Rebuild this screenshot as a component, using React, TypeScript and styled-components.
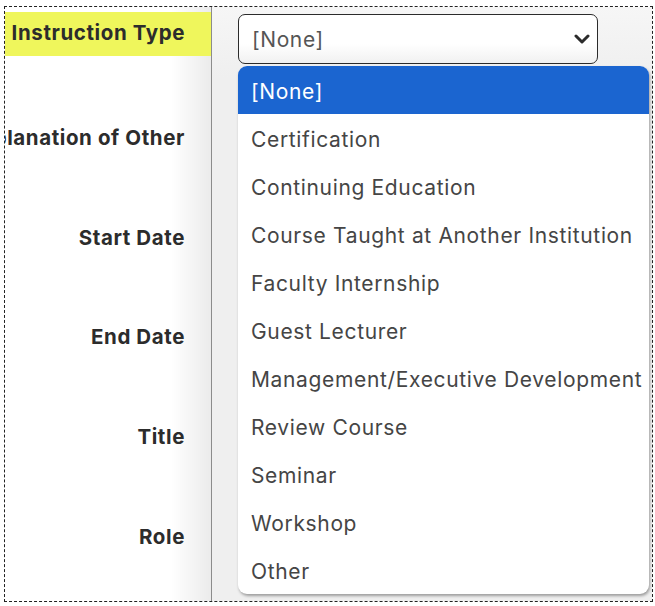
import React from "react";
import styled, { createGlobalStyle } from "styled-components";

const Global = createGlobalStyle`
  html, body { margin: 0; padding: 0; background: #fff; }
  body { font-family: Inter, "Liberation Sans", sans-serif; }
`;

const Frame = styled.div`
  box-sizing: border-box;
  margin: 6px 0 0 4px;
  width: 649px;
  height: 596px;
  border: 1px dashed #222;
  display: grid;
  grid-template-columns: 206px 1px 1fr;
  overflow: hidden;
  position: relative;
`;

const LabelColumn = styled.div`
  display: flex;
  flex-direction: column;
  overflow: hidden;
  background: linear-gradient(to right, #fff calc(100% - 40px), #ebebeb);
`;

const LabelRow = styled.div<{ $highlight?: boolean; $height: number }>`
  box-sizing: border-box;
  height: ${(p) => p.$height}px;
  flex: none;
  display: flex;
  align-items: center;
  justify-content: flex-end;
  padding: 0 26px ${(p) => (p.$highlight ? 3 : 0)}px 0;
  white-space: nowrap;
  font-weight: 700;
  font-size: 20.5px;
  letter-spacing: 0.6px;
  color: #2c2c2c;
  background: ${(p) => (p.$highlight ? "#eff65c" : "transparent")};
`;

const Spacer = styled.div<{ $height: number }>`
  height: ${(p) => p.$height}px;
  flex: none;
`;

const Divider = styled.div`
  background: #8c8c8c;
`;

const FieldPanel = styled.div`
  position: relative;
  background: linear-gradient(to bottom, #f6f6f6 0, #efefef 70px, #efefef 100%);
  padding: 7px 0 0 26px;
`;

const SelectBox = styled.div`
  box-sizing: border-box;
  width: 360px;
  height: 50px;
  border: 1px solid #2b2b2b;
  border-radius: 7px;
  background: linear-gradient(to bottom, #fff 60%, #f1f1f1);
  display: flex;
  align-items: center;
  justify-content: space-between;
  padding: 0 7px 0 13px;
  font-size: 21px;
  letter-spacing: 0.6px;
  color: #555;
`;

const Menu = styled.ul`
  position: absolute;
  left: 26px;
  top: 59px;
  width: 411px;
  margin: 0;
  padding: 0;
  list-style: none;
  background: #fff;
  border-radius: 9px;
  overflow: hidden;
  box-shadow: 1px 2px 3px rgba(0, 0, 0, 0.35);
`;

const Option = styled.li<{ $selected?: boolean }>`
  box-sizing: border-box;
  height: 48px;
  display: flex;
  align-items: center;
  padding: 3px 0 0 13px;
  font-size: 21px;
  letter-spacing: 0.65px;
  white-space: nowrap;
  color: ${(p) => (p.$selected ? "#fff" : "#454545")};
  background: ${(p) => (p.$selected ? "#1b65d0" : "transparent")};
`;

const Chevron = () => (
  <svg width="16" height="10" viewBox="0 0 16 10">
    <polyline points="2,2 8,8 14,2" fill="none" stroke="#2b2b2b" strokeWidth="3" strokeLinecap="round" strokeLinejoin="round" />
  </svg>
);

const options = [
  "[None]",
  "Certification",
  "Continuing Education",
  "Course Taught at Another Institution",
  "Faculty Internship",
  "Guest Lecturer",
  "Management/Executive Development",
  "Review Course",
  "Seminar",
  "Workshop",
  "Other",
];

export default function App() {
  return (
    <>
      <Global />
      <Frame>
        <LabelColumn>
          <Spacer $height={5} />
          <LabelRow $highlight $height={44}>Instruction Type</LabelRow>
          <Spacer $height={57} />
          <LabelRow $height={48}>Explanation of Other</LabelRow>
          <Spacer $height={52} />
          <LabelRow $height={48}>Start Date</LabelRow>
          <Spacer $height={51} />
          <LabelRow $height={48}>End Date</LabelRow>
          <Spacer $height={52} />
          <LabelRow $height={48}>Title</LabelRow>
          <Spacer $height={52} />
          <LabelRow $height={48}>Role</LabelRow>
        </LabelColumn>
        <Divider />
        <FieldPanel>
          <SelectBox>
            <span>[None]</span>
            <Chevron />
          </SelectBox>
          <Menu>
            {options.map((o, i) => (
              <Option key={o} $selected={i === 0}>
                {o}
              </Option>
            ))}
          </Menu>
        </FieldPanel>
      </Frame>
    </>
  );
}
